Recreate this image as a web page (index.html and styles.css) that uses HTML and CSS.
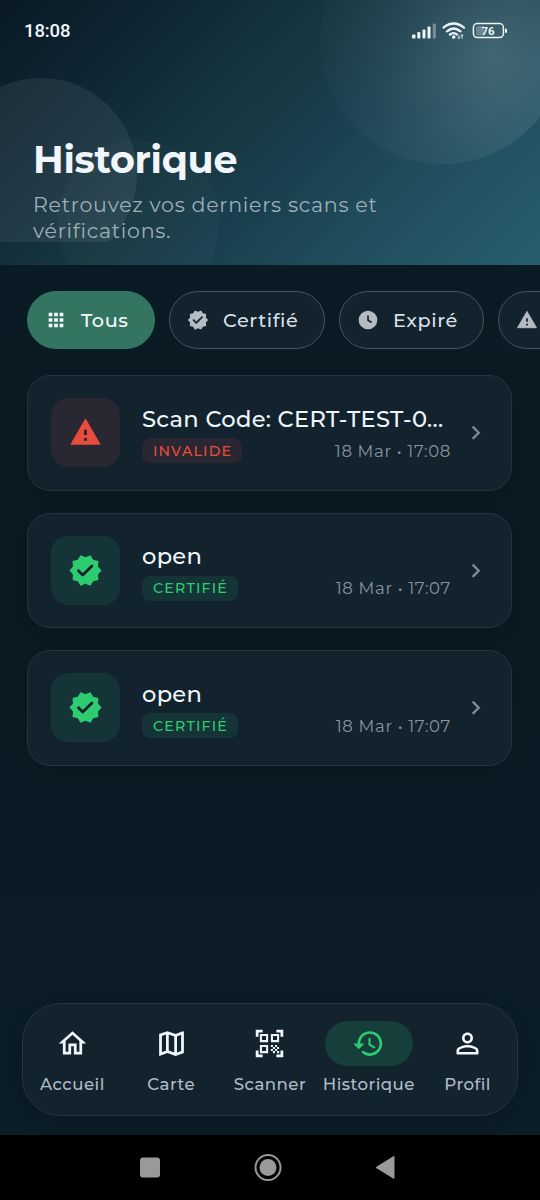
FILE: index.html
```html
<!DOCTYPE html>
<html lang="fr">
<head>
<meta charset="utf-8">
<title>Historique</title>
<link rel="stylesheet" href="styles.css">
</head>
<body>
<svg class="defs" aria-hidden="true">
  <symbol id="verified" viewBox="0 0 24 24"><path fill="currentColor" d="M23 12l-2.44-2.79.34-3.69-3.61-.82-1.89-3.2L12 2.96 8.6 1.5 6.71 4.69 3.1 5.5l.34 3.7L1 12l2.44 2.79-.34 3.7 3.61.82L8.6 22.5l3.4-1.47 3.4 1.46 1.89-3.19 3.61-.82-.34-3.69L23 12z"/><path class="cut" d="M7.2 12.2l2.9 2.9L16.4 8.9"/></symbol>
  <symbol id="warning" viewBox="0 0 24 24"><path fill="currentColor" stroke="currentColor" stroke-linejoin="round" d="M1.7 20.4h20.6L12 2.600z"/><path class="cut warn-cut" d="M12 10v3.800M12 16v2"/></symbol>
  <symbol id="chevron" viewBox="0 0 24 24"><path fill="none" stroke="currentColor" stroke-width="2" d="M9.3 6.7l5.3 5.3-5.3 5.3"/></symbol>
</svg>
<div class="phone">
  <header class="hero">
    <svg class="orbs" viewBox="0 0 540 265">
      <defs><radialGradient id="glow" gradientUnits="userSpaceOnUse" cx="492" cy="56" r="172"><stop offset="0" stop-color="#fff" stop-opacity=".16"/><stop offset=".6" stop-color="#fff" stop-opacity=".055"/><stop offset="1" stop-color="#fff" stop-opacity=".01"/></radialGradient>
      <clipPath id="cut"><path d="M0 0h540v242H0z"/></clipPath></defs>
      <circle cx="443" cy="41" r="123" fill="url(#glow)"/>
      <circle cx="41" cy="174" r="96" fill="#fff" fill-opacity=".07" clip-path="url(#cut)"/>
      <circle cx="138.500" cy="222" r="81" fill="#fff" fill-opacity=".022"/>
    </svg>
    <div class="status">
      <span class="time">18:08</span>
      <svg class="status-icons" width="98" height="20" viewBox="0 0 98 20">
        <g fill="#edf5f8"><rect x="1" y="13.500" width="3.500" height="4" rx="1"/><rect x="6.300" y="11" width="3" height="6.500" rx="1"/><rect x="11.500" y="8.500" width="3" height="9" rx="1"/><rect x="16.500" y="5.500" width="3" height="12" rx="1"/><rect x="21.800" y="2.500" width="3" height="15" rx="1" opacity=".38"/></g>
        <g fill="none" stroke="#edf5f8" stroke-width="2.300" stroke-linecap="round"><path d="M32.500 6.600Q42.500-1.500 53 6.600M36 10.300Q42.500 4.600 49.500 10.300M39 13.500Q42.500 10.700 46 13.500"/></g>
        <circle cx="42.700" cy="16.100" r="1.800" fill="#edf5f8"/><path d="M48 17.500v-3m-1 2l1 1 1-1M51 13.500v4m-1-3l1-1 1 1" stroke="#edf5f8" fill="none"/>
        <rect x="62.400" y="2.600" width="30" height="14" rx="4" fill="none" stroke="#edf5f8" stroke-width="1.500"/><path d="M67 5h6v9.500h-6q-2 0-2-2V7q0-2 2-2z" fill="#9fb4bc" opacity=".5"/><rect x="94" y="7.500" width="2" height="4.500" rx="1" fill="#edf5f8"/>
        <text x="77" y="13.800" class="battery">76</text>
      </svg>
    </div>
    <h1>Historique</h1>
    <p>Retrouvez vos derniers scans et<br>vérifications.</p>
  </header>
  <nav class="filters">
    <button class="chip all active"><svg viewBox="0 0 24 24"><path fill="currentColor" d="M4 4h4v4H4zm6 0h4v4h-4zm6 0h4v4h-4zM4 10h4v4H4zm6 0h4v4h-4zm6 0h4v4h-4zM4 16h4v4H4zm6 0h4v4h-4zm6 0h4v4h-4z"/></svg><span>Tous</span></button>
    <button class="chip certified"><svg><use href="#verified"/></svg><span>Certifié</span></button>
    <button class="chip expired"><svg viewBox="0 0 24 24"><circle cx="12" cy="12" r="10.200" fill="currentColor"/><path d="M12 7v5.300l4 2.400" fill="none" stroke="#12232e" stroke-width="1.800"/></svg><span>Expiré</span></button>
    <button class="chip invalid"><svg><use href="#warning"/></svg></button>
  </nav>
  <main>
    <article class="card bad"><div class="symbol"><svg><use href="#warning"/></svg></div><div class="details"><h2>Scan Code: CERT-TEST-0...</h2><div class="meta"><span class="badge">INVALIDE</span><time>18 Mar • 17:08</time></div></div><svg class="go"><use href="#chevron"/></svg></article>
    <article class="card good"><div class="symbol"><svg><use href="#verified"/></svg></div><div class="details"><h2>open</h2><div class="meta"><span class="badge">CERTIFIÉ</span><time>18 Mar • 17:07</time></div></div><svg class="go"><use href="#chevron"/></svg></article>
    <article class="card good"><div class="symbol"><svg><use href="#verified"/></svg></div><div class="details"><h2>open</h2><div class="meta"><span class="badge">CERTIFIÉ</span><time>18 Mar • 17:07</time></div></div><svg class="go"><use href="#chevron"/></svg></article>
  </main>
  <nav class="tabs">
    <a><i><svg viewBox="0 0 24 24"><path d="M12 5.690l5 4.500V18h-2v-6H9v6H7v-7.810l5-4.500M12 3L2 12h3v8h6v-6h2v6h6v-8h3z"/></svg></i><span>Accueil</span></a>
    <a><i><svg viewBox="0 0 24 24"><path d="M20.500 3l-.16.03L15 5.100 9 3 3.360 4.900c-.21.07-.36.25-.36.48V20.500c0 .28.22.5.5.5l.16-.03L9 18.900l6 2.100 5.640-1.900c.21-.07.36-.25.36-.48V3.500c0-.28-.22-.5-.5-.5zM10 5.470l4 1.400v11.660l-4-1.400V5.470zm-5 .99l3-1.010v11.700l-3 1.160V6.460zm14 11.080l-3 1.010V6.860l3-1.160v11.840z"/></svg></i><span>Carte</span></a>
    <a><i><svg viewBox="0 0 24 24"><path d="M9.500 6.500v3h-3v-3h3M11 5H5v6h6V5zm-1.500 9.500v3h-3v-3h3M11 13H5v6h6v-6zm6.500-6.500v3h-3v-3h3M19 5h-6v6h6V5zm-6 8h1.500v1.500H13V13zm1.500 1.500H16V16h-1.500v-1.500zM16 13h1.500v1.500H16V13zm-3 3h1.500v1.500H13V16zm1.500 1.500H16V19h-1.500v-1.500zM16 16h1.500v1.500H16V16zm1.500-1.500H19V16h-1.500v-1.500zm0 3H19V19h-1.500v-1.500zM22 7h-2V4h-3V2h5v5zm0 15v-5h-2v3h-3v2h5zM2 22h5v-2H4v-3H2v5zM2 2v5h2V4h3V2H2z"/></svg></i><span>Scanner</span></a>
    <a class="selected"><i><svg viewBox="0 0 24 24"><path d="M13 3c-4.970 0-9 4.030-9 9H1.800c-.5 0-.6.4-.3.700l3.100 3.100c.2.200.5.200.7 0l3.100-3.100c.3-.3.100-.7-.3-.7H6c0-3.870 3.130-7 7-7s7 3.130 7 7-3.130 7-7 7c-1.700 0-3.100-.5-4.300-1.500-.9-.7-2.200.5-1.300 1.400C9 20.300 10.900 21 13 21c4.970 0 9-4.030 9-9s-4.030-9-9-9z"/><path class="hands" d="M12.750 8.600v4.200l3.400 2"/></svg></i><span>Historique</span></a>
    <a><i><svg viewBox="0 0 24 24"><path d="M12 5.900a2.100 2.100 0 110 4.200 2.100 2.100 0 010-4.200m0 9c2.970 0 6.100 1.460 6.100 2.100v1.100H5.900V17c0-.64 3.130-2.100 6.100-2.100M12 4C9.790 4 8 5.790 8 8s1.790 4 4 4 4-1.790 4-4-1.790-4-4-4zm0 9c-2.670 0-8 1.340-8 4v2.300q0 .7.700.7h14.600q.7 0 .7-.7V17c0-2.660-5.330-4-8-4z"/></svg></i><span>Profil</span></a>
  </nav>
  <footer class="system">
    <svg viewBox="0 0 28 28"><rect x="4" y="4.500" width="20" height="20" rx="3"/></svg>
    <svg viewBox="0 0 28 28"><circle cx="14" cy="14.500" r="12.500" class="ring"/><circle cx="14" cy="14.500" r="8.500"/></svg>
    <svg viewBox="0 0 28 28"><path d="M22.500 4v21q0 1.200-1.200.6L4.400 15.300q-.9-.8 0-1.600L21.300 3.300q1.200-.6 1.200.7z"/></svg>
  </footer>
</div>
</body>
</html>
```
FILE: styles.css
```css
* { box-sizing: border-box; }
body { margin: 0; background: #0a1a24; font-family: Montserrat, Inter, sans-serif; }
.defs { position: absolute; width: 0; height: 0; }
.phone { width: 540px; height: 1200px; overflow: hidden; display: flex; flex-direction: column; background: linear-gradient(#0b1b25, #0a1a23 52%, #0b1d28); color: #f0f6fc; }
h1, h2, p { margin: 0; font-weight: inherit; }
.hero { position: relative; height: 265px; flex: none; background: linear-gradient(135deg, #091923 0%, #102936 25%, #173842 44%, #193e4d 55%, #225060 78%, #275e6e 100%); }
.orbs { position: absolute; inset: 0; width: 540px; height: 265px; }
.status { position: relative; display: flex; justify-content: space-between; align-items: center; padding: 21px 31px 0 24px; height: 41px; }
.time { font: 500 18.500px Roboto, sans-serif; letter-spacing: -.1px; }
.battery { font: 700 11.500px Roboto, sans-serif; text-anchor: middle; fill: #edf5f8; }
.hero h1 { position: relative; margin: 95px 0 0 33px; font-size: 38px; line-height: 48px; font-weight: 700; letter-spacing: -.3px; }
.hero p { position: relative; margin: 8px 0 0 33px; font-size: 20.600px; line-height: 26px; font-weight: 400; letter-spacing: .7px; color: #9dafba; white-space: nowrap; }
.filters { height: 84px; flex: none; display: flex; gap: 14px; padding: 26px 0 0 27px; overflow: hidden; }
.chip { height: 58px; flex: none; display: flex; align-items: center; gap: 14px; padding: 0 0 0 17px; border: 1.400px solid #44555c; border-radius: 29px; background: #12232e; color: #d8dfe5; font: 500 19.300px Montserrat, Inter, sans-serif; letter-spacing: .6px; }
.chip svg { width: 22px; height: 22px; color: #b4bcc3; }
.chip.active { background: #337560; border-color: #337560; color: #f5faff; }
.chip.active svg { color: #f5faff; }
.all { width: 128px; } .certified { width: 156px; } .expired { width: 145px; } .invalid { width: 160px; }
.cut { fill: none; stroke: #12232e; stroke-width: 1.900; stroke-linecap: round; stroke-linejoin: round; }
.warn-cut { stroke-linecap: butt; }
main { padding: 26px 28px 0 27px; display: flex; flex-direction: column; gap: 22px; }
.card { height: 115.500px; display: flex; align-items: center; padding: 0 22px 0 23px; border: 1.400px solid #24353e; border-radius: 23px; background: #12232e; box-shadow: 0 5px 14px rgba(0,0,0,.15); }
.symbol { width: 69px; height: 69px; flex: none; border-radius: 17px; display: grid; place-items: center; }
.symbol svg { width: 35px; height: 35px; }
.bad .symbol { background: #292731; color: #e74c3c; }
.bad .symbol svg { width: 33px; height: 33px; }
.good .symbol { background: #143438; color: #2ecc71; }
.details { width: 309px; flex: none; margin-left: 22px; padding-top: 2px; }
.details h2 { font-size: 22.600px; line-height: 30px; font-weight: 500; letter-spacing: .3px; white-space: nowrap; }
.meta { display: flex; align-items: center; justify-content: space-between; margin-top: 4px; height: 26px; }
.badge { height: 25px; display: flex; align-items: center; padding-left: 11px; border-radius: 8px; font-size: 14.200px; font-weight: 500; letter-spacing: 1.200px; }
.bad .badge { width: 100px; background: #292731; color: #e74c3c; }
.good .badge { width: 96px; background: #143438; color: #2ecc71; }
time { font-size: 16.500px; font-weight: 400; letter-spacing: .68px; color: #88959e; white-space: nowrap; }
.go { width: 27.500px; height: 27.500px; margin-left: 11px; flex: none; color: #7f8b93; }
.tabs { margin: auto 22px 19.500px; height: 112.500px; flex: none; display: grid; grid-template-columns: repeat(5, 1fr); border: 1.400px solid #24353e; border-radius: 38px; background: #12232e; box-shadow: 0 6px 18px rgba(0,0,0,.15); }
.tabs a { display: flex; flex-direction: column; align-items: center; padding-top: 17px; }
.tabs i { width: 88px; height: 44.500px; border-radius: 23px; display: grid; place-items: center; }
.tabs svg { width: 33px; height: 33px; fill: #f0f6fc; }
.tabs span { margin-top: 7.500px; font-size: 16.600px; line-height: 22px; font-weight: 500; letter-spacing: .45px; color: #b0bbc4; white-space: nowrap; }
.tabs .selected i { background: #163e3a; }
.tabs .selected svg { fill: #2ecc71; }
.tabs .selected .hands { fill: none; stroke: #2ecc71; stroke-width: 1.500; stroke-linecap: round; }
.system { height: 65px; flex: none; display: flex; justify-content: center; gap: 90px; align-items: center; padding: 0 4px 2px 0; background: #000; }
.system svg { width: 28px; height: 28px; fill: #999; }
.system .ring { fill: none; stroke: #999; stroke-width: 2; }
```
